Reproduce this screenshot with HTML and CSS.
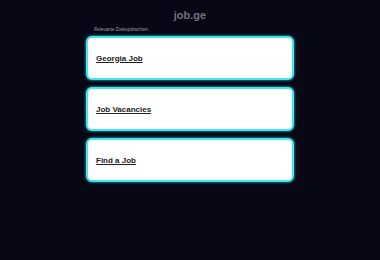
FILE: index.html
```html
<!DOCTYPE html>
<html>
<head>
<meta charset="utf-8">
<link rel="stylesheet" href="styles.css">
</head>
<body>
<div class="page">
  <h1 class="title">job.ge</h1>
  <div class="list">
    <div class="caption">Relevante Zoekopdrachten</div>
    <a class="card" href="#"><span class="label">Georgia Job</span></a>
    <a class="card" href="#"><span class="label">Job Vacancies</span></a>
    <a class="card" href="#"><span class="label">Find a Job</span></a>
  </div>
</div>
</body>
</html>
```
FILE: styles.css
```css
html, body {
  margin: 0;
  padding: 0;
  background: #070716;
  height: 100%;
}
.page {
  display: flex;
  flex-direction: column;
  align-items: center;
  font-family: "Liberation Sans", Arial, sans-serif;
}
.title {
  margin: 8px 0 0;
  height: 14px;
  line-height: 14px;
  font-size: 11px;
  font-weight: bold;
  color: #72727e;
}
.list {
  width: 208px;
  display: flex;
  flex-direction: column;
  gap: 7px;
  margin-top: 3px;
}
.caption {
  font-size: 4.5px;
  color: #9a9aa4;
  padding-left: 8px;
  height: 7px;
  line-height: 9px;
  margin-bottom: -3px;
}
.card {
  box-sizing: border-box;
  height: 44px;
  background: #ffffff;
  border: 2px solid #3ee8ec;
  border-radius: 6px;
  box-shadow: 0 0 3px #2fd8e0;
  display: flex;
  align-items: center;
  padding-left: 8px;
  text-decoration: none;
}
.label {
  font-size: 8px;
  font-weight: bold;
  color: #222222;
  text-decoration: underline;
}
```
